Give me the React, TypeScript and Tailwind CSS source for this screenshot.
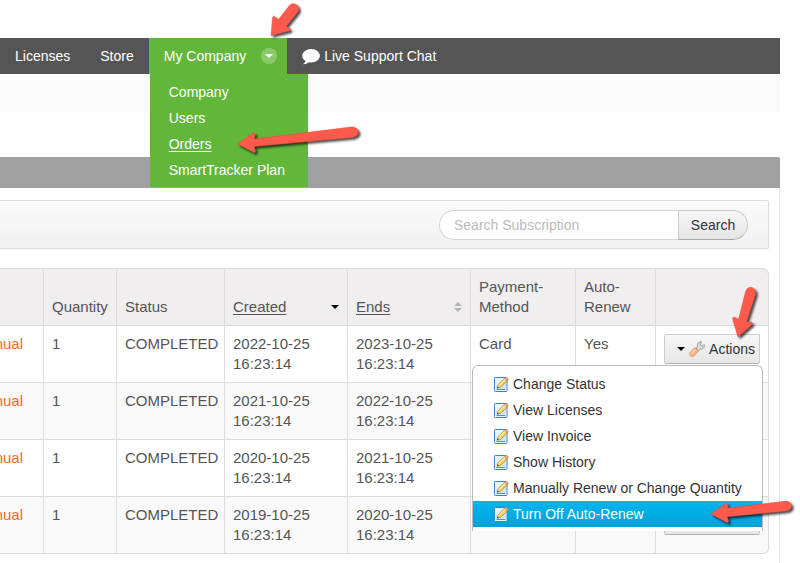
import React from "react";
import clsx from "clsx";

const companyLinks = ["Company", "Users", "Orders", "SmartTracker Plan"];

const orders = [
  { created: "2022-10-25", ends: "2023-10-25", method: "Card", renew: "Yes" },
  { created: "2021-10-25", ends: "2022-10-25", method: "", renew: "" },
  { created: "2020-10-25", ends: "2021-10-25", method: "", renew: "" },
  { created: "2019-10-25", ends: "2020-10-25", method: "", renew: "" },
];

const actions = [
  "Change Status",
  "View Licenses",
  "View Invoice",
  "Show History",
  "Manually Renew or Change Quantity",
  "Turn Off Auto-Renew",
];

function Arrow({ d, viewBox, className }: { d: string; viewBox: string; className: string }) {
  return (
    <svg
      viewBox={viewBox}
      aria-hidden="true"
      className={clsx(
        "pointer-events-none absolute z-30 overflow-visible drop-shadow-[2px_2px_1px_rgba(0,0,0,0.7)]",
        className
      )}
    >
      <path d={d} fill="#ff5a4b" stroke="#e8483b" strokeWidth="0.5" strokeLinejoin="round" />
    </svg>
  );
}

function ChatIcon() {
  return (
    <svg viewBox="0 0 18 17" className="h-[17px] w-[18px]" fill="#fff" aria-hidden="true">
      <path d="M9.2 1C4.200 1 .3 4 .3 7.800c0 2.100 1.200 3.900 3.100 5.100C3.200 14.200 2.400 15.300.9 16.100c2.500.2 4.500-.6 5.900-1.900.8.2 1.600.3 2.400.3 4.900 0 8.700-3 8.700-6.700S14.100 1 9.200 1z" />
    </svg>
  );
}

function EditIcon() {
  return (
    <svg viewBox="0 0 16 16" className="h-4 w-4 shrink-0" aria-hidden="true">
      <rect x="1.500" y="1.500" width="12.500" height="14" rx="0.8" fill="#fff" stroke="#3f7fd0" />
      <rect x="2.500" y="2.500" width="10.500" height="12" fill="#cfe5fa" />
      <path d="M2.500 2.500H13L2.500 10z" fill="#e8f4ff" />
      <path d="M3.500 13.500h8.500" stroke="#4a92e0" />
      <path d="M4.200 12.200l.9-3.600 7-6.900 2.700 2.600-7 7z" fill="#f9cf5c" stroke="#b5822f" strokeWidth="0.7" />
      <path d="M6 9.400l6.600-6.600" stroke="#fff3b5" strokeWidth="1.200" />
      <path d="M11.300 2.500l1.200-1.200c.8-.6 3.200 1.600 2.700 2.500L14 5z" fill="#e3a98a" stroke="#ad7453" strokeWidth="0.5" />
      <path d="M4.200 12.200l.4-1.600 1.300 1.200z" fill="#333" />
    </svg>
  );
}

function WrenchIcon() {
  return (
    <svg viewBox="0 0 16 16" className="h-4 w-4 shrink-0" aria-hidden="true">
      <path
        d="M7 8l1.600-2.900C8 2.900 9.500.7 11.900.8l1 .4-1.500 1.700.4 1.700 1.700.4 1.700-1.500c1 2.500-1.200 5-3.900 4.500L8.800 9.800z"
        fill="#dedede"
        stroke="#8c8c8c"
        strokeWidth="0.9"
      />
      <path
        d="M6 6.700l3.400 3.200-4.500 4.900c-1.300 1.200-3.400.5-4-1-.4-1-.1-1.900.6-2.700z"
        fill="#fdb88d"
        stroke="#ec8147"
        strokeWidth="0.9"
      />
      <path d="M6.200 8.200l-4.100 4.500" stroke="#ffdcc3" strokeWidth="1.200" />
    </svg>
  );
}

function NavBar() {
  return (
    <nav className="flex h-9 bg-[#555] text-sm text-white">
      <a href="#licenses" className="flex items-center px-[15px]">Licenses</a>
      <a href="#store" className="flex items-center px-[15px]">Store</a>
      <div className="relative bg-[#62b73b]">
        <button type="button" className="flex h-full items-center gap-[15px] pl-[15px] pr-[10px]">
          My Company
          <span className="flex h-4 w-4 items-center justify-center rounded-full bg-[#89ca6b]">
            <svg viewBox="0 0 8 4" className="h-1 w-2" fill="#fff" aria-hidden="true">
              <path d="M0 0h8L4 4z" />
            </svg>
          </span>
        </button>
        <Arrow
          viewBox="0 0 30 36"
          className="-top-[34px] left-[120px] h-9 w-[30px]"
          d="M2 31.500L3.500 14C3.700 12 5.500 11.500 6.500 13L9 16 20 2C24-3.500 33 2 28.500 8.500L17 22.500 20 24C22 25 21.500 26.500 20 27z"
        />
        <ul className="absolute top-full left-px z-20 w-[158px] bg-[#62b73b] pt-[5px] pb-1">
          {companyLinks.map((label) => (
            <li key={label} className="relative pl-[19px]">
              <a
                href="#company"
                className={clsx("block leading-[26px]", label === "Orders" && "underline underline-offset-2")}
              >
                {label}
              </a>
              {label === "Orders" && (
                <Arrow
                  viewBox="0 0 124 26"
                  className="top-0 left-[87px] h-[26px] w-[124px]"
                  d="M.5 13L15.500 2.500C17.500 1 18.500 2 18 4L17.500 8 114-4C123-4.500 124 5.500 115 6.500L17 15.500 18.500 19.500C19 21.500 17.500 22 16 21z"
                />
              )}
            </li>
          ))}
        </ul>
      </div>
      <a href="#chat" className="flex items-center gap-1 px-[15px]">
        <ChatIcon />
        Live Support Chat
      </a>
    </nav>
  );
}

function SearchBar() {
  return (
    <form className="flex h-[49px] items-center justify-end rounded-r-xs border border-l-0 border-[#ddd] bg-linear-to-b from-[#fafafa] to-[#f1f1f1] pr-5 shadow-xs">
      <input
        type="text"
        aria-label="Search Subscription"
        placeholder="Search Subscription"
        className="h-[30px] w-[239px] rounded-l-full border border-r-0 border-[#d5d5d5] bg-white px-[14px] text-sm placeholder:text-[#bbb]"
      />
      <button
        type="button"
        className="h-[30px] w-[70px] rounded-r-full border border-[#ccc] border-b-[#aaa] bg-linear-to-b from-[#f7f7f7] to-[#e6e6e6] text-sm text-[#333]"
      >
        Search
      </button>
    </form>
  );
}

function ActionsMenu() {
  return (
    <ul className="absolute top-[31px] -right-[3px] z-10 w-[291px] rounded-t-md border border-b-0 border-[#bbb] bg-white pt-[5px] pb-1 text-sm text-[#333]">
      {actions.map((label, i) => {
        const active = i === actions.length - 1;
        return (
          <li key={label} className="relative">
            <button
              type="button"
              className={clsx(
                "flex h-[26px] w-full items-center gap-1 pl-5 whitespace-nowrap",
                active && "bg-linear-to-b from-[#00b5ee] to-[#00a3d9] text-white"
              )}
            >
              <EditIcon />
              {label}
            </button>
            {active && (
              <Arrow
                viewBox="0 0 84 26"
                className="top-0 -right-[32px] h-[26px] w-[84px]"
                d="M1 13L15 3C17 1.500 18 2.500 17.800 4L17.500 7 75 .3C83-.5 84 9 76 10L17 15.800 18.500 19.500C19 21.500 17.500 22 16 21z"
              />
            )}
          </li>
        );
      })}
    </ul>
  );
}

function ActionsButton({ open }: { open: boolean }) {
  return (
    <div className="relative w-24">
      <button
        type="button"
        className="flex h-[30px] w-full items-center justify-end rounded-xs border border-[#ccc] border-b-[#b3b3b3] bg-linear-to-b from-[#f7f7f7] to-[#e6e6e6] pr-1 text-sm text-[#333]"
      >
        <svg viewBox="0 0 8 4" className="mr-1 h-1 w-2" fill="#000" aria-hidden="true">
          <path d="M0 0h8L4 4z" />
        </svg>
        <WrenchIcon />
        <span className="ml-1">Actions</span>
      </button>
      {open && <ActionsMenu />}
      {open && (
        <Arrow
          viewBox="0 0 28 54"
          className="-top-[49px] right-0 h-[54px] w-7"
          d="M6 52L.8 34.500C.3 32 2 31.500 4 33L6.500 34.500 13.500 7C15.500-1 25 2 23.500 9.500L14.500 37 18.500 37C21 37 21 38.500 19.500 40z"
        />
      )}
    </div>
  );
}

function OrdersTable() {
  const th = "border-r border-b border-[#ddd] px-2 py-2 align-bottom text-left font-normal";
  const td = "border-r border-b border-[#ddd] px-2 py-2 align-top";

  return (
    <table className="w-full table-fixed border-separate border-spacing-0 rounded-r-md border-t border-[#ddd] text-[15px] leading-5 text-[#555]">
      <colgroup>
        <col className="w-[44px]" />
        <col className="w-[73px]" />
        <col className="w-[108px]" />
        <col className="w-[123px]" />
        <col className="w-[123px]" />
        <col className="w-[105px]" />
        <col className="w-[80px]" />
        <col />
      </colgroup>
      <thead className="bg-[#f0eeef]">
        <tr>
          <th className={th} />
          <th className={th}>Quantity</th>
          <th className={th}>Status</th>
          <th className={th}>
            <div className="flex items-center justify-between">
              <a href="#created" className="underline underline-offset-2">Created</a>
              <svg viewBox="0 0 8 4" className="h-1 w-2" fill="#000" aria-hidden="true">
                <path d="M0 0h8L4 4z" />
              </svg>
            </div>
          </th>
          <th className={th}>
            <div className="flex items-center justify-between">
              <a href="#ends" className="underline underline-offset-2">Ends</a>
              <svg viewBox="0 0 8 10" className="h-[10px] w-2" fill="#b5b5b5" aria-hidden="true">
                <path d="M0 4h8L4 0zM0 6h8L4 10z" />
              </svg>
            </div>
          </th>
          <th className={th}>Payment-<br />Method</th>
          <th className={th}>Auto-<br />Renew</th>
          <th className={clsx(th, "rounded-tr-md")} />
        </tr>
      </thead>
      <tbody>
        {orders.map((o, i) => (
          <tr key={o.created} className={i % 2 ? "bg-[#f9f9f9]" : "bg-white"}>
            <td className="border-r border-b border-[#ddd] py-2 pr-5 align-top">
              <div className="flex justify-end overflow-hidden text-[#fb6a1f]">
                <a href="#order">nual</a>
              </div>
            </td>
            <td className={td}>1</td>
            <td className={td}>COMPLETED</td>
            <td className={td}>{o.created}<br />16:23:14</td>
            <td className={td}>{o.ends}<br />16:23:14</td>
            <td className={td}>{o.method}</td>
            <td className={td}>{o.renew}</td>
            <td className={clsx(td, i === orders.length - 1 && "rounded-br-md")}>
              <ActionsButton open={i === 0} />
            </td>
          </tr>
        ))}
      </tbody>
    </table>
  );
}

export default function App() {
  return (
    <div className="bg-white pt-[38px] pr-5 font-['Liberation_Sans',Arial,sans-serif]">
      <NavBar />
      <div className="mt-[6px] h-8 bg-[#fafafa]" />
      <main className="mt-[45px]">
        <div className="h-[31px] rounded-tr-xs bg-[#a0a0a0]" />
        <section className="flex flex-col gap-[19px] border-r border-[#e5e5e5] pt-3 pr-[10px] pb-[9px]">
          <SearchBar />
          <OrdersTable />
        </section>
      </main>
    </div>
  );
}
